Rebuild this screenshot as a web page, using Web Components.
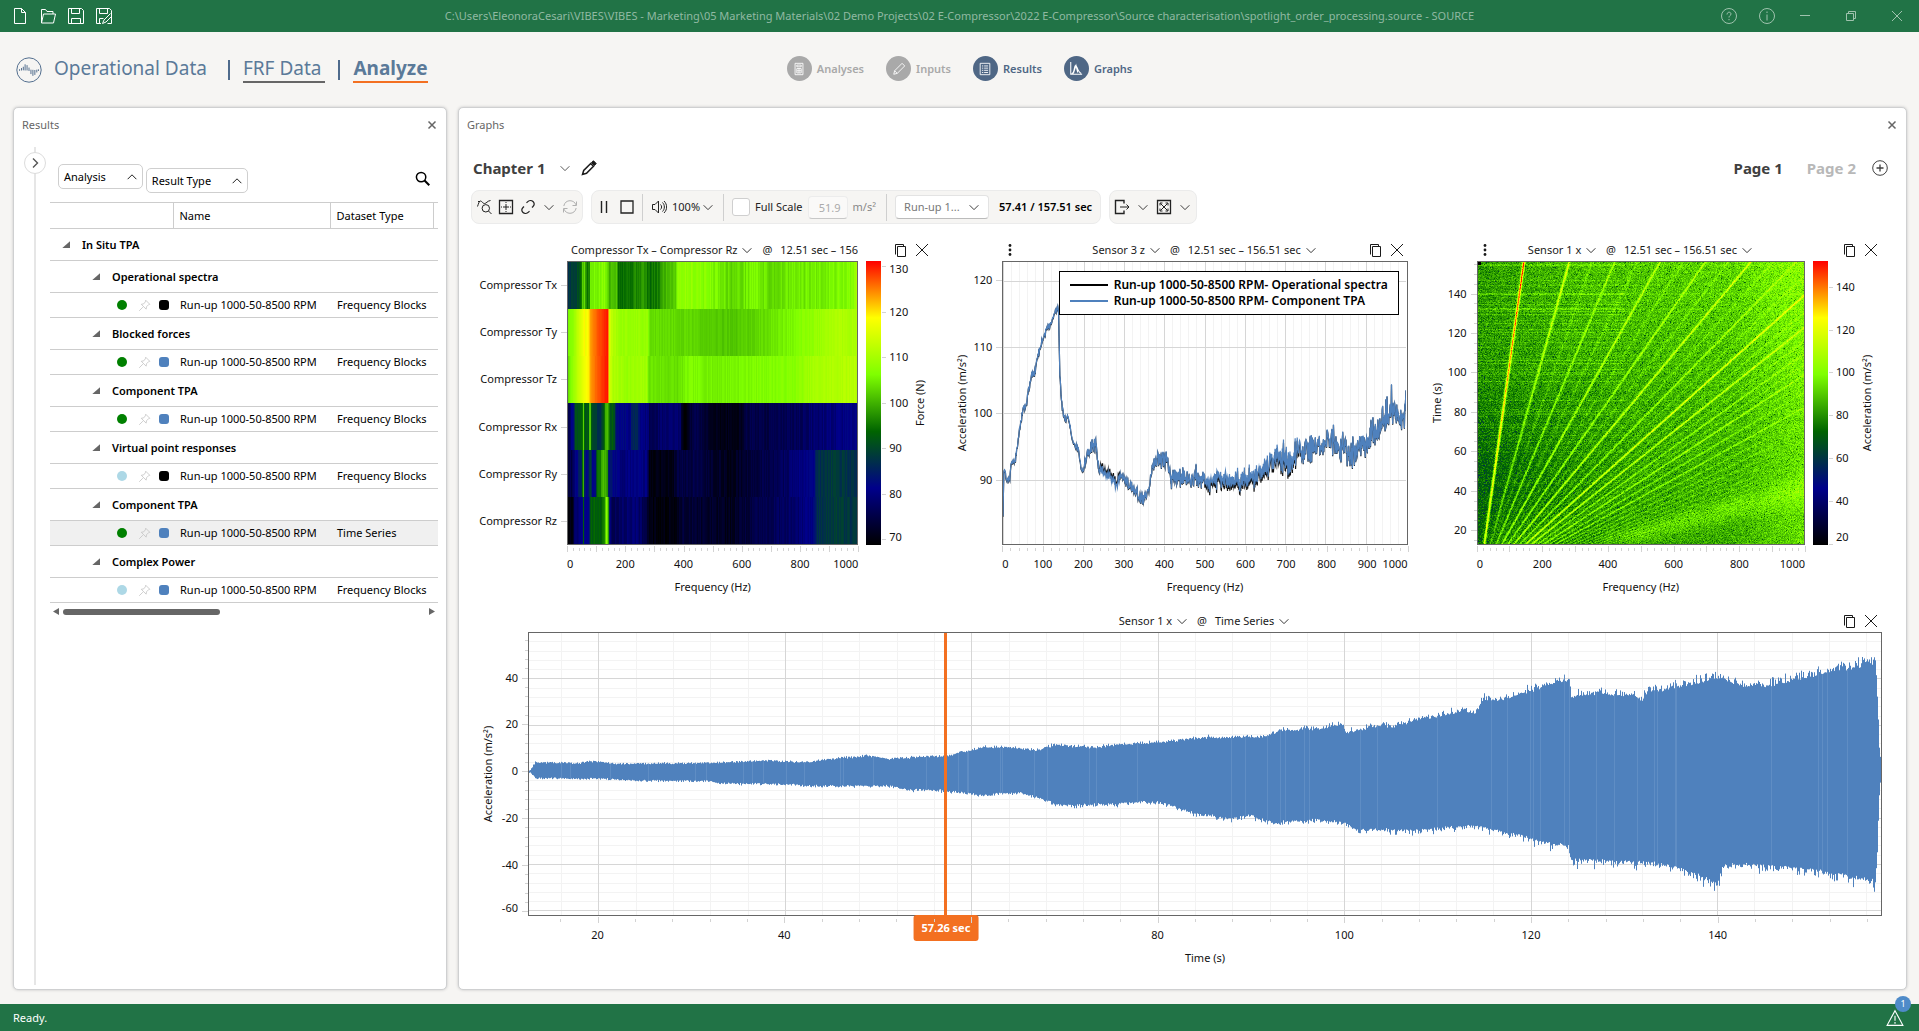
<!DOCTYPE html>
<html lang="en">
<head>
<meta charset="utf-8">
<title>SOURCE</title>
<style>
html, body {
  height: 100%;
}
body {
  margin: 0;
  background: #f6f5f3;
  color: #1a1a1a;
  font: 11px/16px "Noto Sans", "Open Sans", sans-serif;
}
</style>
</head>
<body>
<source-app></source-app>

<script>
// ---------- icons ----------
const ICONS = {
  file: '<path d="M2.500.5h7l4 4v11h-11zM9.500.5v4h4"/>',
  folder: '<path d="M1.500 15V1.500h4l1.500 2h6v2.500M1.500 15l2-9h12l-2 9z"/>',
  save: '<path d="M.5.5h13l2 2v13H.5zM3.500.5v5h8v-5M3.500 15.500v-5h9v5"/>',
  saveEdit: '<path d="M5 15.500H.5V.5h13l2 2v13h-4M3.500.5v5h8v-5M3.500 15.500v-5h4M14.500 5.500L8 12l-1.500 3.500L10 14l6-6"/>',
  help: '<circle cx="8" cy="8" r="7.500"/><path d="M6 6.500c0-3 4-3 4-.5 0 1.500-2 1.500-2 3.500M8 11v1.200"/>',
  info: '<circle cx="8" cy="8" r="7.500"/><path d="M8 6.500v6M8 3.500v1.500"/>',
  minimize: '<path d="M3 7.500h10"/>',
  restore: '<path d="M3.500 5.500h7v7h-7zM5.500 5V3.500h7v7H11"/>',
  close: '<path d="M3 3l10 10M13 3L3 13"/>',
  bigClose: '<path d="M2 2l12 12M14 2L2 14"/>',
  smallClose: '<path d="M4.500 4.500l7 7M11.500 4.500l-7 7" stroke-width="1.500"/>',
  down: '<path d="M3 6l5 5 5-5"/>',
  up: '<path d="M3 10.500l5-5 5 5"/>',
  right: '<path d="M6 3.500l4.500 4.500L6 12.500" stroke-width="1.400"/>',
  search: '<circle cx="6.500" cy="6.500" r="5" stroke-width="1.600"/><path d="M10.200 10.200l5 5" stroke-width="2.200"/>',
  pencil: '<path d="M1.500 14.500l1.200-4 7-7 2.800 2.800-7 7z" stroke-width="1.500"/><path d="M10.500 2.500L12.500.8l2.700 2.700-1.700 2z" fill="currentColor"/>',
  plus: '<circle cx="8" cy="8" r="7.300"/><path d="M8 4.500v7M4.500 8h7" stroke-width="1.300"/>',
  orders: '<path d="M1.500 7.500C2.500 5 3 2 4.500 2S6.500 4.500 8.500 4.500 11 2 14.500 1.500M2 2.500h2"/><circle cx="9.800" cy="9.300" r="3.700"/><path d="M12.500 12l3 3"/>',
  grid: '<path d="M1.500 1.500h13v13h-13z" stroke-width="1.300"/><path d="M8 3v3M8 10v3M3 8h3M10 8h3" stroke-dasharray="1 1"/><path d="M7 7h2v2H7z"/>',
  link: '<path d="M6.500 3.800l1-1c1.500-1.500 4-1.800 5.500-.3s1.400 3.500 0 5l-1 1M9.500 12.200l-1 1c-1.500 1.500-4 1.800-5.500.3s-1.400-3.500 0-5l1-1" stroke-width="1.200"/>',
  refresh: '<path d="M1.800 7C2.500 3.500 5 1.700 8 1.700S13 3.500 14.200 6M14.500 2.500v4h-4M14.200 9c-.7 3.500-3.200 5.300-6.200 5.300S3 12.500 1.800 10M1.500 13.500v-4h4"/>',
  pause: '<path d="M5.500 2v12M10.500 2v12" stroke-width="1.400"/>',
  stop: '<path d="M2 2h12v12H2z" stroke-width="1.300"/>',
  speaker: '<path d="M1.500 5.500h2.500l3.500-3.500v12L4 10.500H1.500zM9.500 5.500c1.500 1.500 1.500 3.500 0 5M11.500 3.500c2.500 2.500 2.500 6.500 0 9M13 2c3.500 3.500 3.500 8.500 0 12"/>',
  exportOut: '<path d="M10 4.500v-3H1.500v13H10v-3" stroke-width="1.400"/><path d="M6 8h9M12.500 5.500L15 8l-2.500 2.500"/>',
  boxX: '<path d="M1.500 1.500h13v13h-13z" stroke-width="1.300"/><path d="M4.500 4.500l7 7M11.500 4.500l-7 7M4 6.500V4h2.500M9.500 4H12v2.500M4 9.500V12h2.500M12 9.500V12H9.500"/>',
  copy: '<path d="M5.500 4.500h8v10h-8zM3.500 12.500v-10h8v2"/>',
  more: '<g fill="currentColor" stroke="none"><circle cx="8" cy="3.500" r="1.400"/><circle cx="8" cy="8" r="1.400"/><circle cx="8" cy="12.500" r="1.400"/></g>',
  pin: '<path d="M9.500 1.500l5 5-1.500.5-2.500 2.500-.5 3-6-6 3-.5L9 3.500zM6 10l-4.500 4.500"/>',
  warning: '<path d="M8 1.500l7 13H1zM8 6v4.500M8 11.500v1.500"/>',
  logo: '<circle cx="8" cy="8" r="7.500" stroke-width=".6"/><path d="M2.200 7.500v1M3.400 6.800v1.500M4.500 6v2.200M5.600 4.500v3.800M6.800 5v3.300M8 6.500v2.100M9.200 7.800v2.700M10.400 7.900v3.700M11.600 8v3M12.800 7.800v1.700M13.800 7.600v1" stroke-width=".6"/>',
  calc: '<path d="M3.500 1.500h9v13h-9zM5.500 3.500h5v2h-5zM5.500 7.500h5v5h-5zM8 7.500v5M5.500 10h5"/>',
  edit: '<path d="M2 14l1-4 8.500-8.500 3 3L6 13zM3 10l3 3"/>',
  list: '<path d="M2.500 1.500h11v13h-11zM4.500 4.500h1.500M7 4.500h4.500M4.500 7h1.500M7 7h4.500M4.500 9.500h1.500M7 9.500h4.500M4.500 12h1.500M7 12h4.500"/>',
  curve: '<path d="M2 0v14h13M3 13.500c4-1 2.500-9.500 4.500-9.500s2 7.500 6.500 9M5 13l3-9 2 8" stroke-width="1.200"/>'
};

function icon(name, size = 16) {
  return `<svg width="${size}" height="${size}" viewBox="0 0 16 16" fill="none" stroke="currentColor" aria-hidden="true">${ICONS[name]}</svg>`;
}

const chevron = icon("down", 14);

const BASE = `
*, *::before { box-sizing: border-box; }
svg { display: block; flex: none; }
button {
  display: inline-flex;
  align-items: center;
  padding: 0;
  border: 0;
  background: none;
  color: inherit;
  font: inherit;
  white-space: nowrap;
  cursor: pointer;
}
select, input { font: inherit; color: inherit; }
a { color: inherit; text-decoration: none; }
`;

class Base extends HTMLElement {
  constructor() {
    super();
    const tpl = document.createElement("template");
    tpl.innerHTML = `<style>${BASE}${this.styles()}</style>${this.markup()}`;
    this.attachShadow({ mode: "open" }).append(tpl.content.cloneNode(true));
  }
  styles() { return ":host { display: block; }"; }
  markup() { return "<slot></slot>"; }
}

// ---------- window chrome ----------
customElements.define("title-bar", class extends Base {
  styles() {
    return `
    :host {
      display: grid;
      grid-template-columns: 1fr auto 1fr;
      align-items: center;
      height: 32px;
      background: #217346;
      color: #fff;
    }
    div { display: flex; align-items: center; gap: 12px; padding-left: 12px; }
    .win { justify-self: end; gap: 22px; padding: 0 14px 0 0; color: #9fc3ae; }
    .win button:nth-child(n + 4) { margin-left: 8px; }
    span { color: #90b9a2; white-space: nowrap; }`;
  }
  markup() {
    return `
    <div>
      <button aria-label="New">${icon("file")}</button>
      <button aria-label="Open">${icon("folder")}</button>
      <button aria-label="Save">${icon("save")}</button>
      <button aria-label="Save as">${icon("saveEdit")}</button>
    </div>
    <span><slot></slot></span>
    <div class="win">
      <button aria-label="Help">${icon("help")}</button>
      <button aria-label="About">${icon("info")}</button>
      <button aria-label="Minimize">${icon("minimize")}</button>
      <button aria-label="Restore">${icon("restore")}</button>
      <button aria-label="Close">${icon("close")}</button>
    </div>`;
  }
});

customElements.define("main-nav", class extends Base {
  styles() {
    return `
    :host {
      display: grid;
      grid-template-columns: 1fr auto 1fr;
      align-items: center;
      height: 75px;
      padding: 0 16px;
      color: #5b7a99;
    }
    .tabs, .steps, .steps a { display: flex; align-items: center; }
    .tabs a { border-bottom: 2px solid transparent; font-size: 19px; line-height: 25px; white-space: nowrap; }
    .tabs svg { margin-right: 12px; color: #4f6b8c; }
    .tabs i { width: 2px; height: 20px; margin: 0 13px; background: #4f6b8c; }
    .tabs a:first-of-type { margin-right: 8px; }
    .tabs .visited { padding-right: 4px; border-color: #666; }
    .tabs .active { border-color: #f37021; font-weight: 700; }
    .steps { gap: 22px; padding-bottom: 2px; font-weight: 600; color: #4f6785; }
    .steps a { gap: 5px; }
    .steps b { display: grid; place-items: center; width: 25px; height: 25px; border-radius: 50%; background: #4f6785; color: #fff; }
    .steps .off { color: #a9a9a9; }
    .steps .off b { background: #a9a9a9; color: #fff; }`;
  }
  markup() {
    return `
    <nav class="tabs">
      ${icon("logo", 26)}
      <a href="#operational">Operational Data</a><i></i>
      <a href="#frf" class="visited">FRF Data</a><i></i>
      <a href="#analyze" class="active">Analyze</a>
    </nav>
    <nav class="steps">
      <a href="#analyses" class="off"><b>${icon("calc", 14)}</b>Analyses</a>
      <a href="#inputs" class="off"><b>${icon("edit", 14)}</b>Inputs</a>
      <a href="#results"><b>${icon("list", 14)}</b>Results</a>
      <a href="#graphs"><b>${icon("curve", 14)}</b>Graphs</a>
    </nav>`;
  }
});

customElements.define("status-bar", class extends Base {
  styles() {
    return `
    :host {
      display: flex;
      align-items: center;
      justify-content: space-between;
      height: 27px;
      padding: 0 15px 0 13px;
      background: #217346;
      color: #fff;
    }
    button { position: relative; }
    span {
      position: absolute;
      left: 9px;
      top: -13px;
      width: 16px;
      border-radius: 8px;
      background: #4f8bc9;
      font-size: 9px;
      text-align: center;
    }`;
  }
  markup() {
    return `<slot></slot><button aria-label="Warnings">${icon("warning", 18)}<span>1</span></button>`;
  }
});

customElements.define("dock-panel", class extends Base {
  static observedAttributes = ["heading"];
  styles() {
    return `
    :host {
      display: flex;
      flex-direction: column;
      min-width: 0;
      border: 1px solid #cfd0d1;
      border-radius: 5px;
      background: #fff;
      box-shadow: 0 0 3px #c4c4c4;
    }
    header {
      display: flex;
      align-items: center;
      justify-content: space-between;
      height: 34px;
      padding: 0 6px 0 8px;
      color: #666;
    }
    ::slotted(*) { flex: 1; }`;
  }
  markup() {
    return `<header><span></span><button aria-label="Close panel">${icon("smallClose")}</button></header><slot></slot>`;
  }
  attributeChangedCallback(name, old, value) {
    this.shadowRoot.querySelector("header span").textContent = value;
  }
});

// ---------- results tree ----------
const RESULTS = [
  ["Operational spectra", "green", "#000", "Frequency Blocks"],
  ["Blocked forces", "green", "#4f81bd", "Frequency Blocks"],
  ["Component TPA", "green", "#4f81bd", "Frequency Blocks"],
  ["Virtual point responses", "#add8e6", "#000", "Frequency Blocks"],
  ["Component TPA", "green", "#4f81bd", "Time Series", true],
  ["Complex Power", "#add8e6", "#4f81bd", "Frequency Blocks"]
];

customElements.define("results-tree", class extends Base {
  styles() {
    return `
    :host { display: flex; padding-right: 8px; color: #000; }
    .rail {
      display: flex;
      justify-content: center;
      width: 36px;
      flex: none;
      margin: 5px 0 4px;
      padding: 5px 0 5px 5px;
      background: linear-gradient(#e6e6e6, #e6e6e6) 20px 0 / 2px 100% no-repeat;
      align-items: flex-start;
    }
    .rail button {
      justify-content: center;
      width: 22px;
      height: 22px;
      border: 1px solid #dcdcdc;
      border-radius: 50%;
      background: #fff;
      color: #555;
    }
    .main { flex: 1; min-width: 0; padding-top: 22px; }
    .filters { display: flex; gap: 3px; height: 29px; margin-bottom: 9px; padding: 0 8px; }
    .chip {
      justify-content: space-between;
      gap: 19px;
      height: 25px;
      padding: 0 3px 0 5px;
      border: 1px solid #cfcfcf;
      border-radius: 5px;
    }
    .chip + .chip { align-self: flex-end; }
    .find { margin-left: auto; }
    table { width: 100%; border-collapse: collapse; table-layout: fixed; }
    th, td { height: 25px; padding: 0; border-bottom: 1px solid #cdcdcd; text-align: left; font-weight: 400; white-space: nowrap; }
    thead th { height: 26px; border-top: 1px solid #cdcdcd; padding-left: 6px; border-right: 1px solid #cdcdcd; }
    thead th:last-child { border-right: 0; }
    .group th { height: 32px; padding: 0 0 0 42px; font-weight: 600; }
    .group.root th { padding-left: 12px; }
    .group button::before {
      content: "";
      width: 8px;
      height: 7px;
      margin-right: 12px;
      background: #666;
      clip-path: polygon(100% 0, 100% 100%, 0 100%);
    }
    .selected { background: #f0f0f0; }
    .marks { display: flex; align-items: center; height: 24px; padding-left: 67px; border: 0; color: #c4c4c4; }
    .dot { width: 10px; height: 10px; border-radius: 5px; }
    .marks svg { margin: 0 8px 0 11px; }
    .key { width: 10px; height: 10px; border-radius: 3px; }
    tbody td + td { padding-left: 7px; }
    .scroll { display: flex; align-items: center; height: 17px; padding: 0 3px; }
    .scroll i { width: 6px; height: 7px; background: #666; clip-path: polygon(0 50%, 100% 0, 100% 100%); }
    .scroll i:last-child { margin-left: auto; clip-path: polygon(0 0, 100% 50%, 0 100%); }
    .scroll b { width: 41%; height: 6px; margin-left: 4px; border-radius: 3px; background: #666; }`;
  }
  markup() {
    const rows = RESULTS.map(([group, dot, key, type, selected]) => `
      <tr class="group"><th colspan="4"><button>${group}</button></th></tr>
      <tr class="${selected ? "selected" : ""}">
        <td><div class="marks"><span class="dot" style="background:${dot}"></span>${icon("pin", 13)}<span class="key" style="background:${key}"></span></div></td>
        <td>Run-up 1000-50-8500 RPM</td><td colspan="2">${type}</td>
      </tr>`).join("");
    return `
    <div class="rail"><button aria-label="Expand">${icon("right")}</button></div>
    <div class="main">
      <div class="filters">
        <button class="chip">Analysis ${icon("up", 14)}</button>
        <button class="chip">Result Type ${icon("up", 14)}</button>
        <button class="find" aria-label="Search">${icon("search", 15)}</button>
      </div>
      <table>
        <colgroup><col style="width:123px"><col style="width:157px"><col style="width:103px"><col></colgroup>
        <thead><tr><th></th><th>Name</th><th>Dataset Type</th><th></th></tr></thead>
        <tbody>
          <tr class="group root"><th colspan="4"><button>In Situ TPA</button></th></tr>
          ${rows}
        </tbody>
      </table>
      <div class="scroll"><i></i><b></b><i></i></div>
    </div>`;
  }
});

// ---------- graph page header ----------
customElements.define("chapter-bar", class extends Base {
  styles() {
    return `
    :host { display: flex; align-items: center; height: 20px; padding: 0 18px 0 14px; color: #404040; font-size: 15px; font-weight: 700; }
    button { gap: 12px; }
    .edit { margin-left: 9px; color: #1a1a1a; }
    nav { display: flex; align-items: center; gap: 24px; margin-left: auto; }
    nav a + a { color: #b8b8b8; }
    nav button { margin-left: -8px; }`;
  }
  markup() {
    return `
    <button>Chapter 1 ${chevron}</button>
    <button class="edit" aria-label="Rename chapter">${icon("pencil")}</button>
    <nav><a href="#page1">Page 1</a><a href="#page2">Page 2</a><button aria-label="Add page">${icon("plus")}</button></nav>`;
  }
});

customElements.define("plot-toolbar", class extends Base {
  styles() {
    return `
    :host { display: flex; gap: 8px; height: 34px; padding: 0 12px; color: #222; }
    .group { display: flex; align-items: center; border: 1px solid #ebebeb; border-radius: 8px; background: #f6f5f3; }
    .seg { display: flex; align-items: center; gap: 5px; height: 27px; padding: 0 8px; }
    .seg + .seg { border-left: 1px solid #cfcfcf; }
    .icons { gap: 6px; padding: 0 4px; }
    .icons.play { gap: 7px; padding: 0 7px 0 4px; }
    .off { color: #b0b0b0; }
    .pick { position: relative; display: flex; align-items: center; }
    .pick svg { margin-left: -16px; pointer-events: none; }
    select { appearance: none; border: 0; background: none; padding: 0; outline: 0; }
    .volume select { width: 45px; }
    .run { padding-right: 5px; }
    .run select {
      width: 94px;
      height: 24px;
      padding: 0 8px;
      border: 1px solid #e3e3e3;
      border-bottom-color: #bbb;
      border-radius: 4px;
      background: #fff;
      color: #777;
    }
    .run svg { margin: 0 8px 0 -22px; }
    input[type="checkbox"] { appearance: none; width: 18px; height: 18px; margin: 0; border: 1px solid #cfcfcf; border-radius: 3px; background: #fff; }
    input[type="text"] {
      width: 40px;
      height: 23px;
      padding: 0 6px;
      border: 1px solid #ececec;
      border-bottom-color: #c8c8c8;
      border-radius: 4px;
      background: #faf9f8;
      color: #aaa;
      text-align: right;
    }
    .unit { color: #888; padding-right: 2px; }
    strong { font-weight: 600; color: #000; }`;
  }
  markup() {
    return `
    <div class="group"><div class="seg icons">
      <button aria-label="Analyze orders">${icon("orders")}</button>
      <button aria-label="Cursor grid">${icon("grid")}</button>
      <button aria-label="Link axes">${icon("link")}</button>
      <button aria-label="Link options">${chevron}</button>
      <button class="off" aria-label="Refresh">${icon("refresh")}</button>
    </div></div>
    <div class="group">
      <div class="seg icons play">
        <button aria-label="Pause">${icon("pause")}</button>
        <button aria-label="Stop">${icon("stop")}</button>
      </div>
      <div class="seg">
        <button aria-label="Mute">${icon("speaker")}</button>
        <span class="pick volume"><select aria-label="Volume"><option>100%</option></select>${chevron}</span>
      </div>
      <div class="seg">
        <input type="checkbox" id="full"><label for="full">Full Scale</label>
        <input type="text" value="51.9" aria-label="Scale" disabled><span class="unit">m/s²</span>
      </div>
      <div class="seg">
        <span class="pick run"><select aria-label="Run"><option>Run-up 1...</option></select>${chevron}</span>
        <strong>57.41 / 157.51 sec</strong>
      </div>
    </div>
    <div class="group"><div class="seg icons">
      <button aria-label="Export">${icon("exportOut")}</button>
      <button aria-label="Export options">${chevron}</button>
      <button aria-label="Fit">${icon("boxX")}</button>
      <button aria-label="Fit options">${chevron}</button>
    </div></div>`;
  }
});

// ---------- axes ----------
function range(min, max, step) {
  const out = [];
  for (let v = Math.ceil(min / step) * step; v <= max + 1e-6; v += step) out.push(v);
  return out;
}

// <axis-scale side="x" min max step minor label labelstep names="a|b|c">
customElements.define("axis-scale", class extends Base {
  styles() {
    return `
    :host { position: relative; display: block; color: #111; }
    i { position: absolute; background: #d3d3d3; }
    span { position: absolute; white-space: nowrap; }
    :host([side="x"]) i { top: 3px; width: 1px; height: 3px; }
    :host([side="x"]) i.major { top: 1px; height: 6px; }
    :host([side="x"]) span { top: 11px; transform: translateX(-50%); }
    :host([side="x"]) span.first { transform: none; }
    :host([side="x"]) span.last { transform: translateX(-100%); }
    p { margin: 0; white-space: nowrap; }
    :host([side="x"]) p { padding-top: 34px; text-align: center; }
    :host([side="y"]) i { right: 0; width: 3px; height: 1px; }
    :host([side="y"]) i.major { width: 6px; }
    :host([side="y"]) span { right: 10px; transform: translateY(-50%); }
    :host([side="y"]) p, :host([side="scale"]) p {
      position: absolute;
      top: 50%;
      left: 21px;
      writing-mode: vertical-rl;
      transform: translateY(-50%) rotate(180deg);
    }
    :host([side="scale"]) i { left: 1px; width: 4px; height: 1px; }
    :host([side="scale"]) span { left: 8px; transform: translateY(-50%); }
    :host([side="scale"]) p { left: 31px; }`;
  }
  markup() { return "<p></p>"; }
  connectedCallback() {
    const side = this.getAttribute("side");
    const min = +this.getAttribute("min");
    const max = +this.getAttribute("max");
    const step = +this.getAttribute("step");
    const minor = +this.getAttribute("minor");
    const labelStep = +this.getAttribute("labelstep") || step;
    const names = this.hasAttribute("names") ? this.getAttribute("names").split("|") : null;
    const skip = this.getAttribute("skip");
    const root = this.shadowRoot;
    root.querySelector("p").textContent = this.getAttribute("label");
    const place = (el, v) => {
      const f = (v - min) / (max - min);
      if (side === "x") el.style.left = `${f * 100}%`;
      else el.style.top = el.tagName === "I" ? `${(1 - f) * 100}%` : `clamp(8px, ${(1 - f) * 100}%, 100% - 8px)`;
      return f;
    };
    const add = (tag, v, cls = "") => {
      const el = document.createElement(tag);
      el.className = cls;
      const f = place(el, v);
      root.append(el);
      return [el, f];
    };
    if (names) {
      names.forEach((name, n) => {
        const v = names.length - n - 0.5;
        add("i", v, "major");
        add("span", v)[0].textContent = name;
      });
      return;
    }
    if (minor) range(min, max, minor).forEach((v) => add("i", v));
    range(min, max, step).forEach((v) => add("i", v, "major"));
    range(min, max, labelStep).forEach((v) => {
      if (String(v) === skip) return;
      const [el, f] = add("span", v);
      el.textContent = v;
      if (side === "x" && f < 0.005) el.className = "first";
      if (side === "x" && f > 0.995) el.className = "last";
    });
  }
});

customElements.define("color-scale", class extends Base {
  styles() {
    return `
    :host { display: flex; margin-left: 8px; }
    div { width: 15px; background: linear-gradient(#f00, #ff0 20%, #7fff00 40%, #006400 60%, #00008b 80%, #000); }
    ::slotted(axis-scale) { flex: 1; }`;
  }
  markup() { return "<div></div><slot></slot>"; }
});

// ---------- drawing ----------
const STOPS = [[0, 0, 0], [0, 0, 139], [0, 100, 0], [127, 255, 0], [255, 255, 0], [255, 0, 0]];

function heat(v) {
  const p = Math.min(Math.max(v, 0), 0.9999) * 5;
  const n = Math.floor(p);
  return STOPS[n].map((c, k) => c + (STOPS[n + 1][k] - c) * (p - n));
}

function random(seed) {
  return () => {
    seed = (seed * 1664525 + 1013904223) >>> 0;
    return seed / 4294967296;
  };
}

function lerp(points, x, k = 1) {
  let n = 1;
  while (n < points.length - 1 && points[n][0] < x) n++;
  const a = points[n - 1];
  const b = points[n];
  const f = Math.min(Math.max((x - a[0]) / (b[0] - a[0]), 0), 1);
  return a[k] + (b[k] - a[k]) * f;
}

// "x y x y ..." to pairs
function pairs(text) {
  const n = text.trim().split(/\s+/).map(Number);
  const out = [];
  for (let k = 0; k < n.length; k += 2) out.push([n[k], n[k + 1]]);
  return out;
}

const FORCES = [
  "0 .3 30 .34 45 .42 48 .56 53 .48 56 .58 60 .44 72 .42 76 .57 90 .58 125 .61 137 .56 140 .48 152 .54 168 .52 172 .42 210 .42 260 .47 280 .41 310 .43 330 .5 370 .54 376 .62 400 .63 450 .62 520 .59 560 .55 600 .56 640 .6 700 .55 760 .57 850 .58 960 .6 985 .6 990 .66 1000 .66",
  "0 .59 15 .62 30 .69 50 .77 56 .81 58 .77 72 .82 74 .87 100 .93 138 .99 139 .74 155 .68 180 .64 230 .64 276 .63 278 .56 400 .55 500 .53 590 .53 680 .56 760 .59 850 .63 920 .67 1000 .67",
  "0 .56 12 .62 30 .69 50 .76 72 .82 74 .87 100 .93 138 .99 139 .74 155 .67 200 .64 270 .65 278 .57 380 .56 420 .6 500 .58 650 .6 780 .61 850 .66 1000 .69",
  "0 .12 18 .22 25 .36 50 .4 52 .56 56 .35 70 .38 72 .55 78 .5 80 .33 110 .3 125 .42 130 .53 140 .48 144 .38 160 .37 164 .22 200 .2 212 .18 220 .28 240 .28 246 .2 275 .17 280 .12 330 .15 388 .15 392 .02 410 .02 420 .08 450 .12 470 .06 520 .03 600 .04 620 .1 700 .1 780 .12 860 .16 1000 .2",
  "0 .1 10 .1 25 .2 45 .28 51 .54 56 .25 68 .2 75 .35 82 .22 95 .22 98 .4 110 .44 118 .5 134 .5 138 .25 180 .17 250 .2 272 .17 280 .03 360 .03 375 .09 450 .1 560 .03 620 .08 740 .13 800 .18 850 .2 856 .29 920 .32 1000 .28",
  "0 .02 15 .04 20 .14 48 .2 52 .4 56 .2 70 .2 76 .38 120 .4 126 .48 130 .6 137 .58 141 .25 150 .12 230 .17 250 .14 276 .06 282 .02 370 .02 400 .08 560 .04 640 .1 700 .12 800 .16 850 .2 856 .28 920 .32 1000 .3"
].map(pairs);

const SPECTRUM = pairs(`0 84.500 2 91 5 91.500 8 89.800 12 90 17 90.300 20 92.500 25 92.800 30 92.700 33 94 40 97 50 100.700 56 100.800
  65 104 73 106 80 106 85 108.500 95 110.500 110 113 120 113.700 130 115.300 136 116 138 115 141 106 145 102 150 100 155 98.800
  160 99.500 165 98.500 172 96 180 95 187 94.500 193 92 199 91.200 205 93 215 94.500 225 95.500 232 94.500 238 91.500 250 91
  265 90.600 275 89.800 282 89 292 90.600 300 90.200 315 89 330 88 340 87.300 350 87 362 88.500 368 91 380 93 390 93.500
  400 93.300 410 92.500 417 90 440 90.300 480 90.200 520 89.800 560 89.900 610 90 640 91 680 93.300 710 93.200 740 94.200
  780 95 820 96 840 94.300 870 94.400 890 95 920 97 940 98.700 965 100.300 985 99.500 997 99.700 1000 103.500`);

const NOISE = pairs("0 .2 70 .5 135 .3 150 .5 200 .3 210 .8 225 1.500 235 1 250 .7 350 .8 380 1.500 410 1.500 450 1.300 560 1.600 680 2 820 2.100 1000 2.100");

const UPPER = pairs(`12.600 0 13.200 3.500 18 3 18.800 4 22 2.800 32 3.200 38 4.200 42 3.500 45 5 49 6.200 51 4.800 55 6 57.500 6.200 59 8 61 10
  64 10 67 8.700 69 11.200 73 9.700 76 11.500 80 12 84 14 88 14.500 91 14.500 93 17 98 18.500 99.700 20.500 100.200 16.500 104 19.700 105 18.700
  108 22.500 111 24.500 113 26.500 113.900 24 115 31 117 31 120 35 123 38.500 124.200 40 124.300 32 126 33.500 131 33 132 30.500
  132.200 34 137 37.500 140 41 143 37 146 37.500 150 41.500 155 45.500 157 47.500 157.200 30 157.400 8 157.600 2`);

const LOWER = pairs(`12.600 0 13.200 -2.600 22 -3 24 -3.700 32 -4 33 -4.800 41 -5.500 43 -6 51 -6 53 -7.500 57 -8 61 -10 65 -9 67 -11 69.500 -14.500
  75 -14 78 -13 80 -13.200 82 -15.500 84 -18 88 -20.500 90 -19 92 -22 97 -21 100 -22 101 -25 108 -25.500 112 -24 114 -23.500
  118 -27 122 -31.500 124 -32 124.300 -38.500 130 -39 134 -40 138 -45 140 -49.500 140.600 -41 144 -40.500 148 -42 153 -44.500
  157 -48 157.200 -30 157.400 -8 157.600 -1`);

function gridLines(ctx, w, h, plot) {
  const px = (v) => Math.round(((v - plot.x[0]) / (plot.x[1] - plot.x[0])) * w);
  const py = (v) => Math.round((1 - (v - plot.y[0]) / (plot.y[1] - plot.y[0])) * h);
  const lines = (color, xs, ys) => {
    ctx.fillStyle = color;
    xs.forEach((v) => ctx.fillRect(px(v), 0, 1, h));
    ys.forEach((v) => ctx.fillRect(0, py(v), w, 1));
  };
  lines("#f3f3f3", range(...plot.x, plot.minor[0]), plot.minor[1] ? range(...plot.y, plot.minor[1]) : []);
  lines("#d6d6d6", range(...plot.x, plot.major[0]), range(...plot.y, plot.major[1]));
}

function drawForces(ctx, w, h) {
  FORCES.forEach((row, n) => {
    const rnd = random(n + 5);
    const top = Math.round((n * h) / 6);
    const bottom = Math.round(((n + 1) * h) / 6);
    for (let x = 0; x < w; x++) {
      const f = (x / w) * 1000;
      const amp = (n === 1 || n === 2) ? (f < 139 ? 0.008 : 0.025) : 0.045;
      ctx.fillStyle = `rgb(${heat(lerp(row, f) + (rnd() - 0.5) * amp)})`;
      ctx.fillRect(x, top, 1, bottom - top);
    }
  });
}

function drawSpectrum(ctx, w, h, plot) {
  gridLines(ctx, w, h, plot);
  const py = (v) => (1 - (v - plot.y[0]) / (plot.y[1] - plot.y[0])) * h;
  const trace = (color, offset) => {
    const rnd = random(42);
    ctx.beginPath();
    for (let f = 0; f <= 1000; f += 1) {
      let n = (rnd() + rnd() - 1) * lerp(NOISE, f) * 1.300;
      if (rnd() > 0.95 && f > 400) n = Math.abs(n) * 1.800;
      if (f < 3 || f > 998) n = 0;
      ctx.lineTo((f / 1000) * w, py(lerp(SPECTRUM, f) + n + offset(f)));
    }
    ctx.strokeStyle = color;
    ctx.lineWidth = 1.200;
    ctx.stroke();
  };
  trace("#111", (f) => ((f > 240 && f < 290) ? 0.4 : (f > 500 && f < 740) ? -0.5 : -0.1));
  trace("#4f81bd", () => 0);
}

// run-up map: engine orders fan out from the lower left corner
function drawOrders(ctx, w, h) {
  const img = ctx.createImageData(w, h);
  const rnd = random(7);
  const level = { 1: 0.97, 2: 0.75, 3: 0.66, 4: 0.71, 5: 0.68, 6: 0.75, 7: 0.68, 8: 0.8, 9: 0.76, 10: 0.67, 11: 0.7, 12: 0.65, 13: 0.68 };
  for (let y = 0; y < h; y++) {
    const t = 1 - y / h;
    const base = 18 + t * 121;
    const streak = rnd() > 0.7 ? rnd() * 0.07 * (0.15 + t) : 0;
    for (let x = 0; x < w; x++) {
      const f = (x / w) * 1000;
      let v = 0.44 + 0.03 * t + 0.07 * (f / 1000);
      if (f > 800) v += (f - 800) / 4000;
      if (t > 0.5) v += (t - 0.5) * 0.05 * Math.min(1, f / 300);
      v += streak * (f < 450 ? 1 : 0.25);
      v -= Math.max(0, 0.06 - Math.abs(t - 0.22) * 0.15) * Math.max(0, 1 - f / 500);
      const k = Math.max(1, Math.round(f / base));
      const d = Math.abs(f - k * base);
      const width = Math.min(k < 3 ? 4 : 3 + k * 0.2, base * 0.26);
      const top = (level[k] || Math.max(0.56, 0.66 - k * 0.003)) - (1 - t) * (k < 3 ? 0.24 : 0.08);
      let g = Math.exp(-(d * d) / (width * width));
      if (k > 22) g *= 0.5;
      if (top > v) v += (top - v) * g;
      const half = (Math.floor(f / base) + 0.5) * base;
      if (f > base * 2 && k < 12) v += 0.045 * Math.exp(-((f - half) ** 2) / 20);
      const band = 0.02 + Math.max(0, f - 440) * 0.00031;
      if (f > 340) v += 0.06 * Math.min(1, (f - 340) / 150) * Math.exp(-(((t - band) / (0.015 + f / 30000)) ** 2));
      v += (rnd() + rnd() - 1) * 0.08;
      if (rnd() > 0.975) v -= 0.11;
      const c = heat(v);
      const p = (y * w + x) * 4;
      img.data[p] = c[0];
      img.data[p + 1] = c[1];
      img.data[p + 2] = c[2];
      img.data[p + 3] = 255;
    }
  }
  ctx.putImageData(img, 0, 0);
  ctx.fillStyle = "#000";
  ctx.fillRect(0, 0, 3, 3);
}

function drawSeries(ctx, w, h, plot) {
  gridLines(ctx, w, h, plot);
  const rnd = random(11);
  const py = (v) => (1 - (v - plot.y[0]) / (plot.y[1] - plot.y[0])) * h;
  for (let x = 0; x < w; x++) {
    const t = plot.x[0] + (x / w) * (plot.x[1] - plot.x[0]);
    const up = lerp(UPPER, t);
    const low = lerp(LOWER, t);
    const top = py(up * (0.97 + rnd() * rnd() * 0.12) + rnd() * 0.8);
    const bottom = py(low * (0.97 + rnd() * rnd() * 0.12) - rnd() * 0.8);
    ctx.fillStyle = rnd() > 0.96 ? "#5f8dc4" : "#4f81bd";
    ctx.fillRect(x, top, 1, bottom - top);
  }
}

const PLOTS = {
  forces: { draw: drawForces },
  spectrum: { draw: drawSpectrum, x: [0, 1000], y: [80.3, 122.8], major: [100, 10], minor: [20, 0] },
  orders: { draw: drawOrders },
  series: { draw: drawSeries, x: [12.55, 157.6], y: [-62, 59.6], major: [20, 20], minor: [4, 4] }
};

customElements.define("plot-card", class extends Base {
  styles() {
    return `
    :host {
      display: grid;
      grid-template-columns: 69px minmax(0, 1fr) var(--right, 0px);
      grid-template-rows: 22px minmax(160px, 1fr) 65px;
      min-width: 0;
      min-height: 0;
    }
    :host([kind="forces"]) { --right: 75px; grid-template-columns: 108px minmax(0, 1fr) 75px; }
    :host([kind="orders"]) { --right: 77px; }
    .more, .title, .tools { grid-row: 1; display: flex; align-items: center; }
    .more { grid-column: 2; justify-self: start; }
    :host(:not([menu])) .more { display: none; }
    .title { grid-column: 2; justify-content: center; gap: 8px; overflow: hidden; white-space: nowrap; }
    :host([kind="forces"]) .title { justify-content: flex-start; padding-left: 4px; }
    .tools { grid-column: 1 / -1; justify-self: end; gap: 6px; padding-right: 3px; }
    .plot { position: relative; grid-area: 2 / 2; border: 1px solid #666; min-height: 0; }
    canvas { position: absolute; inset: 0; }
    slot[name="y"], slot[name="x"], slot[name="scale"] { display: grid; min-height: 0; }
    slot[name="y"] { grid-area: 2 / 1; }
    slot[name="scale"] { grid-area: 2 / 3; }
    slot[name="x"] { grid-area: 3 / 2; }`;
  }
  markup() {
    return `
    <button class="more" aria-label="More">${icon("more")}</button>
    <div class="title"></div>
    <div class="tools">
      <button aria-label="Copy">${icon("copy")}</button>
      <button aria-label="Remove">${icon("bigClose")}</button>
    </div>
    <slot name="y"></slot>
    <div class="plot"><canvas></canvas><slot></slot></div>
    <slot name="scale"></slot>
    <slot name="x"></slot>`;
  }
  connectedCallback() {
    const [channel, span] = this.getAttribute("heading").split(" @ ");
    this.shadowRoot.querySelector(".title").innerHTML =
      `<button>${channel}&nbsp;${chevron}</button><span>@</span><button>${span}&nbsp;${chevron}</button>`;
    this.draw();
    new ResizeObserver(() => this.draw()).observe(this.shadowRoot.querySelector(".plot"));
  }
  draw() {
    const box = this.shadowRoot.querySelector(".plot");
    const canvas = this.shadowRoot.querySelector("canvas");
    const w = box.clientWidth;
    const h = box.clientHeight;
    if (!w || !h) return;
    canvas.width = w;
    canvas.height = h;
    const plot = PLOTS[this.getAttribute("kind")];
    plot.draw(canvas.getContext("2d"), w, h, plot);
  }
});

customElements.define("plot-legend", class extends Base {
  styles() {
    return `
    :host {
      position: absolute;
      top: 9px;
      right: 8px;
      display: block;
      padding: 5px 10px;
      border: 1px solid #000;
      background: #fff;
      color: #000;
      font-size: 12px;
      font-weight: 600;
    }
    div { display: flex; align-items: center; gap: 6px; white-space: nowrap; }
    i { width: 38px; height: 2px; background: #000; }
    div + div i { background: #4f81bd; }`;
  }
  markup() {
    return `<div><i></i>Run-up 1000-50-8500 RPM- Operational spectra</div>
    <div><i></i>Run-up 1000-50-8500 RPM- Component TPA</div>`;
  }
});

customElements.define("time-cursor", class extends Base {
  styles() {
    return `
    :host { position: absolute; top: 0; bottom: 0; left: 30.8%; width: 3px; margin-left: -1px; background: #f37021; }
    span {
      position: absolute;
      top: 100%;
      left: 50%;
      transform: translateX(-50%);
      padding: 5px 8px;
      border-radius: 3px;
      background: #f37021;
      color: #fff;
      font-weight: 700;
      white-space: nowrap;
    }`;
  }
  markup() { return "<span><slot></slot></span>"; }
});

customElements.define("graph-page", class extends Base {
  styles() {
    return `
    :host { display: flex; flex-direction: column; min-height: 0; padding: 16px 24px 8px 0; }
    chapter-bar, plot-toolbar { margin-right: -24px; }
    plot-toolbar { margin-top: 12px; }
    .plots {
      flex: 1;
      display: grid;
      grid-template-columns: repeat(3, minmax(0, 1fr));
      grid-template-rows: repeat(2, minmax(0, 1fr));
      margin-top: 15px;
    }
    .wide { grid-column: 1 / -1; }`;
  }
  markup() {
    return `
    <chapter-bar></chapter-bar>
    <plot-toolbar></plot-toolbar>
    <div class="plots">
      <plot-card kind="forces" heading="Compressor Tx – Compressor Rz @ 12.51 sec – 156.51 sec">
        <axis-scale slot="y" side="y" min="0" max="6" label="" names="Compressor Tx|Compressor Ty|Compressor Tz|Compressor Rx|Compressor Ry|Compressor Rz"></axis-scale>
        <axis-scale slot="x" side="x" min="0" max="1000" step="100" minor="20" labelstep="200" label="Frequency (Hz)"></axis-scale>
        <color-scale slot="scale"><axis-scale side="scale" min="68.7" max="131.2" step="10" label="Force (N)"></axis-scale></color-scale>
      </plot-card>
      <plot-card kind="spectrum" menu heading="Sensor 3 z @ 12.51 sec – 156.51 sec">
        <axis-scale slot="y" side="y" min="80.3" max="122.8" step="10" label="Acceleration (m/s²)"></axis-scale>
        <axis-scale slot="x" side="x" min="0" max="1000" step="100" minor="20" label="Frequency (Hz)"></axis-scale>
        <plot-legend></plot-legend>
      </plot-card>
      <plot-card kind="orders" menu heading="Sensor 1 x @ 12.51 sec – 156.51 sec">
        <axis-scale slot="y" side="y" min="12.5" max="156.5" step="20" minor="5" label="Time (s)"></axis-scale>
        <axis-scale slot="x" side="x" min="0" max="1000" step="100" minor="20" labelstep="200" label="Frequency (Hz)"></axis-scale>
        <color-scale slot="scale"><axis-scale side="scale" min="19.5" max="152" step="20" label="Acceleration (m/s²)"></axis-scale></color-scale>
      </plot-card>
      <plot-card class="wide" kind="series" heading="Sensor 1 x @ Time Series">
        <axis-scale slot="y" side="y" min="-62" max="59.6" step="20" minor="4" label="Acceleration (m/s²)"></axis-scale>
        <axis-scale slot="x" side="x" min="12.55" max="157.6" step="20" minor="4" skip="60" label="Time (s)"></axis-scale>
        <time-cursor>57.26 sec</time-cursor>
      </plot-card>
    </div>`;
  }
});

customElements.define("source-app", class extends Base {
  styles() {
    return `
    :host { display: flex; flex-direction: column; min-height: 100vh; }
    main { flex: 1; display: flex; gap: 11px; padding: 0 12px 14px 13px; }
    dock-panel { flex: 1; }
    dock-panel:first-child { flex: 0 0 434px; }`;
  }
  markup() {
    return `
    <title-bar>C:\\Users\\EleonoraCesari\\VIBES\\VIBES - Marketing\\05 Marketing Materials\\02 Demo Projects\\02 E-Compressor\\2022 E-Compressor\\Source characterisation\\spotlight_order_processing.source - SOURCE</title-bar>
    <main-nav></main-nav>
    <main>
      <dock-panel heading="Results"><results-tree></results-tree></dock-panel>
      <dock-panel heading="Graphs"><graph-page></graph-page></dock-panel>
    </main>
    <status-bar>Ready.</status-bar>`;
  }
});
</script>
</body>
</html>
